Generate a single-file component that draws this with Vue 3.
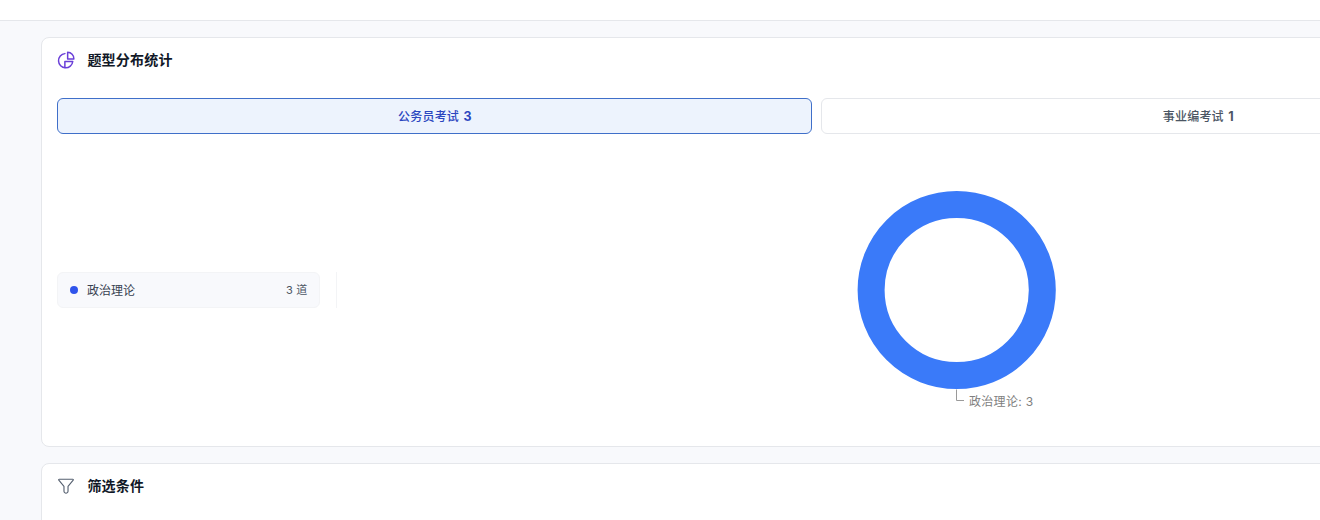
<script setup>
const tabs = [
  { label: '公务员考试', count: 3, active: true },
  { label: '事业编考试', count: 1, active: false }
]
const legend = [{ name: '政治理论', count: 3 }]
</script>

<template>
  <div class="page">
    <header class="topbar"></header>
    <main class="content">
      <section class="card">
        <div class="card-head">
          <svg class="icon" viewBox="0 0 24 24" fill="none" stroke="#6a3fd8" stroke-width="2" stroke-linecap="round" stroke-linejoin="round">
            <path d="M10.500 3.500A9.500 9.500 0 1 0 21 14H10.500V22.500" />
            <path d="M14.200 1.800A8.500 8.500 0 0 1 22.500 10.500H14.200V1.800Z" />
          </svg>
          <h2>题型分布统计</h2>
        </div>
        <div class="card-body">
          <div class="tabs">
            <button v-for="t in tabs" :key="t.label" class="tab" :class="{ active: t.active }">
              <span class="tab-text">{{ t.label }} <b>{{ t.count }}</b></span>
            </button>
          </div>
          <div class="stats">
            <div class="legend">
              <div v-for="l in legend" :key="l.name" class="legend-item">
                <span class="dot"></span>
                <span class="name">{{ l.name }}</span>
                <span class="num">{{ l.count }} 道</span>
              </div>
            </div>
            <div class="chart">
              <svg class="donut" width="280" height="280" viewBox="0 0 280 280">
                <circle cx="139.700" cy="140" r="85.600" fill="none" stroke="#3a7af9" stroke-width="27" />
                <path d="M139.500 239.500V250.500H147" fill="none" stroke="#9a9a9a" stroke-width="1" />
                <text x="152" y="255.500" class="label">政治理论: 3</text>
              </svg>
            </div>
          </div>
        </div>
      </section>
      <section class="card card-tall">
        <div class="card-head">
          <svg class="icon" viewBox="0 0 24 24" fill="none" stroke="#566070" stroke-width="1.500" stroke-linecap="round" stroke-linejoin="round">
            <path d="M3 3h18a.8.8 0 0 1 .6 1.300L14.700 12.500v6.500a2.500 2.500 0 0 1-.9 1.800a3 3 0 0 1-3.600 0a2.500 2.500 0 0 1-.9-1.800v-6.500L2.400 4.300A.8.8 0 0 1 3 3z" />
          </svg>
          <h2>筛选条件</h2>
        </div>
      </section>
    </main>
  </div>
</template>

<style scoped>
.page {
  width: 1320px;
  height: 520px;
  overflow: hidden;
  background: #f8f9fc;
  font-family: Inter, "Noto Sans CJK SC", sans-serif;
  color: #111827;
}
.topbar {
  height: 20px;
  background: #fff;
  border-bottom: 1px solid #e5e7eb;
}
.content {
  width: 1551px;
  margin-left: 41px;
  padding-top: 16px;
  display: flex;
  flex-direction: column;
  gap: 16px;
}
.card {
  flex: none;
  box-sizing: border-box;
  background: #fff;
  border: 1px solid #e5e7eb;
  border-radius: 8px;
}
.card-tall {
  min-height: 200px;
}
.card-head {
  height: 44px;
  padding: 0 15.400px;
  display: flex;
  align-items: center;
  gap: 12px;
}
.icon {
  width: 18px;
  height: 18px;
  flex: none;
}
h2 {
  margin: 0;
  font-size: 14px;
  font-weight: 600;
  line-height: 20px;
  letter-spacing: 0.2px;
  color: #111827;
}
.card-body {
  padding: 16px 15.200px 16px 15.400px;
}
.tabs {
  display: grid;
  grid-template-columns: 1fr 1fr;
  gap: 8.400px;
}
.tab {
  height: 36px;
  box-sizing: border-box;
  border: 1px solid #e5e7eb;
  border-radius: 6px;
  background: #fff;
  color: #4b5563;
  font-family: inherit;
  font-size: 12px;
  font-weight: 500;
  letter-spacing: 0.2px;
  word-spacing: 1px;
  padding: 0 0 2px;
}
.tab b {
  font-weight: 700;
  font-size: 12.500px;
}
.tab.active {
  background: #edf3fd;
  border-color: #3f6fc9;
  color: #2b46c0;
}
.stats {
  margin-top: 16px;
  height: 280px;
  display: flex;
  align-items: center;
}
.legend {
  width: 280px;
  flex: none;
  box-sizing: border-box;
  padding-right: 16px;
  border-right: 1px solid #f3f4f6;
}
.legend-item {
  height: 36px;
  box-sizing: border-box;
  padding: 0 12px;
  display: flex;
  align-items: center;
  gap: 8.600px;
  background: #f8f9fc;
  border: 1px solid #f3f4f6;
  border-radius: 6px;
  font-size: 12px;
  color: #374151;
}
.dot {
  width: 8px;
  height: 8px;
  border-radius: 50%;
  background: #2f54eb;
}
.name {
  flex: 1;
  margin-bottom: 2px;
}
.num {
  font-size: 11px;
  color: #4b5563;
  letter-spacing: 0.2px;
  margin-bottom: 2px;
}
.chart {
  flex: 1;
  display: flex;
  justify-content: center;
}
.label {
  font-size: 12px;
  letter-spacing: 0.3px;
  fill: #808080;
}
</style>
